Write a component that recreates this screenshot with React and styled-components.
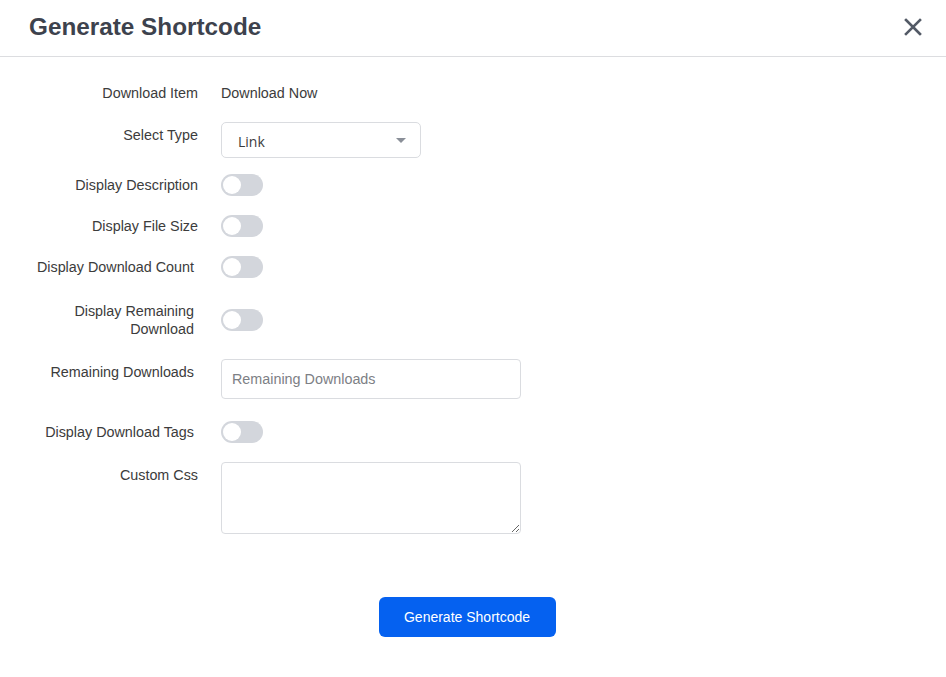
import React from "react";
import styled, { createGlobalStyle } from "styled-components";

const Global = createGlobalStyle`
  html, body { margin: 0; padding: 0; background: #fff; }
  body { font-family: "Liberation Sans", Arial, sans-serif; color: #3c3c3c; }
  * { box-sizing: border-box; }
`;

const Modal = styled.div`
  width: 946px;
  height: 677px;
  background: #fff;
  display: flex;
  flex-direction: column;
`;

const Header = styled.div`
  height: 57px;
  border-bottom: 1px solid #dcdde0;
  display: flex;
  align-items: center;
  justify-content: space-between;
  padding: 0 20px 2px 29px;
`;

const Title = styled.h2`
  margin: 0;
  font-family: "Liberation Sans", Arial, sans-serif;
  font-weight: 700;
  font-size: 24.3px;
  color: #3d424d;
`;

const CloseBtn = styled.button`
  border: 0;
  background: none;
  padding: 0;
  width: 26px;
  height: 26px;
  display: flex;
  align-items: center;
  justify-content: center;
  cursor: pointer;
`;

const Body = styled.div`
  padding: 27px 20px 0 20px;
  display: flex;
  flex-direction: column;
`;

const Row = styled.div`
  display: grid;
  grid-template-columns: 178px 1fr;
  column-gap: 23px;
  align-items: ${(p) => (p.$center ? "center" : "start")};
  margin-bottom: ${(p) => p.$mb || 0}px;
`;

const Label = styled.div`
  text-align: right;
  font-size: 14.35px;
  line-height: 18px;
  color: #3c3c3c;
  padding-right: ${(p) => (p.$tight ? 4 : 0)}px;
  padding-top: ${(p) => p.$pt || 0}px;
`;

const Value = styled.div`
  font-size: 14.35px;
  line-height: 18px;
  color: #3c3c3c;
`;

const SelectBox = styled.div`
  width: 200px;
  height: 36px;
  border: 1px solid #dadce0;
  border-radius: 5px;
  display: flex;
  align-items: center;
  justify-content: space-between;
  padding: 2px 14px 0 16px;
  font-family: "Open Sans", "Noto Sans", sans-serif;
  font-size: 14px;
  color: #3c3c3c;
`;

const Caret = styled.span`
  width: 0;
  height: 0;
  border-left: 5px solid transparent;
  border-right: 5px solid transparent;
  border-top: 5px solid #8a8f98;
  margin-top: -2px;
`;

const Switch = styled.div`
  width: 42px;
  height: 22px;
  border-radius: 11px;
  background: #d3d6dc;
  position: relative;
  &::after {
    content: "";
    position: absolute;
    left: 2px;
    top: 2px;
    width: 18px;
    height: 18px;
    border-radius: 50%;
    background: #fff;
  }
`;

const TextInput = styled.input`
  width: 300px;
  height: 40px;
  border: 1px solid #dadce0;
  border-radius: 4px;
  padding: 0 10px;
  font-family: "Liberation Sans", Arial, sans-serif;
  font-size: 14.35px;
  outline: none;
  &::placeholder { color: #7d8085; }
`;

const TextArea = styled.textarea`
  width: 300px;
  height: 72px;
  border: 1px solid #dadce0;
  border-radius: 4px;
  padding: 8px 10px;
  font-family: "Liberation Sans", Arial, sans-serif;
  font-size: 14px;
  resize: vertical;
  outline: none;
  display: block;
`;

const Footer = styled.div`
  display: flex;
  justify-content: center;
  padding: 63px 12px 0 0;
`;

const PrimaryButton = styled.button`
  width: 177px;
  height: 40px;
  border: 0;
  border-radius: 6px;
  background: #0561f0;
  color: #fff;
  font-family: "Liberation Sans", Arial, sans-serif;
  font-size: 14px;
  cursor: pointer;
`;

export default function App() {
  return (
    <Modal>
      <Global />
      <Header>
        <Title>Generate Shortcode</Title>
        <CloseBtn aria-label="close">
          <svg width="18" height="18" viewBox="0 0 18 18">
            <path d="M2 2 L16 16 M16 2 L2 16" stroke="#535a66" strokeWidth="2.6" strokeLinecap="square" />
          </svg>
        </CloseBtn>
      </Header>
      <Body>
        <Row $mb={20}>
          <Label>Download Item</Label>
          <Value>Download Now</Value>
        </Row>
        <Row $mb={16}>
          <Label $pt={4}>Select Type</Label>
          <SelectBox>
            <span>Link</span>
            <Caret />
          </SelectBox>
        </Row>
        <Row $center $mb={19}>
          <Label>Display Description</Label>
          <Switch />
        </Row>
        <Row $center $mb={19}>
          <Label>Display File Size</Label>
          <Switch />
        </Row>
        <Row $center $mb={24}>
          <Label $tight>Display Download Count</Label>
          <Switch />
        </Row>
        <Row $center $mb={21}>
          <Label $tight>Display Remaining<br />Download</Label>
          <Switch />
        </Row>
        <Row $mb={22}>
          <Label $tight $pt={4}>Remaining Downloads</Label>
          <TextInput placeholder="Remaining Downloads" />
        </Row>
        <Row $center $mb={19}>
          <Label $tight>Display Download Tags</Label>
          <Switch />
        </Row>
        <Row>
          <Label $pt={4}>Custom Css</Label>
          <TextArea />
        </Row>
        <Footer>
          <PrimaryButton>Generate Shortcode</PrimaryButton>
        </Footer>
      </Body>
    </Modal>
  );
}
